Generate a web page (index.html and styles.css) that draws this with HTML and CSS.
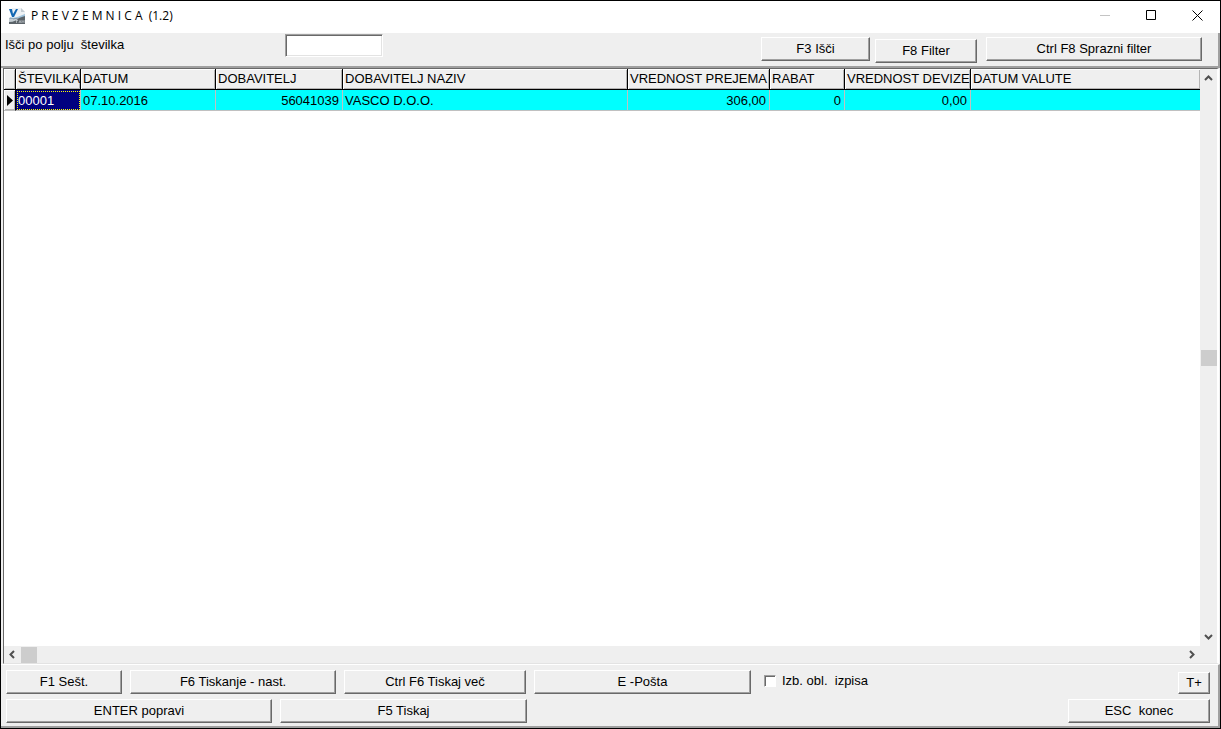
FILE: index.html
```html
<!DOCTYPE html>
<html lang="sl">

<head>
  <meta charset="utf-8">
  <title>PREVZEMNICA (1.2)</title>
  <meta name="viewport" content="width=device-width, initial-scale=1">
  <link rel="stylesheet" href="styles.css">
</head>

<body>
  <div class="window">
    <header class="titlebar">
      <svg class="logo" width="16" height="16" viewBox="0 0 16 16">
        <path d="M3 0h9l4 4v12H3z" fill="#eef2f5"/>
        <path d="M12 0v4h4z" fill="#c3ccd3"/>
        <path d="M1 9c5 2 9-1 15-3v5H0z" fill="#9fc3dc"/>
        <path d="M0 10c5 2 10 0 16-2v8H0z" fill="#5b6369"/>
        <path d="M0 10c4 2 7 1 10 0-2 2-5 4-10 4z" fill="#c5ced4"/>
        <path d="M7 12.500h2M7.500 12v3M10 15l1-2.500 1 2.500M13 15v-2.500l1 1 1-1V15" fill="none" stroke="#c9cfd3" stroke-width=".7"/>
        <path d="M0 1h3l1 5 3-5h2L5 9H3z" fill="#1268b3"/>
      </svg>
      <h1 class="title">P R E V Z E M N I C A&nbsp; (1.2)</h1>
      <button class="winbtn" aria-label="Minimize" disabled>
        <svg width="11" height="11" viewBox="0 0 11 11"><path d="M0 5.500h10" stroke="#c4c4c4"/></svg>
      </button>
      <button class="winbtn" aria-label="Maximize">
        <svg width="11" height="11" viewBox="0 0 11 11"><path d="M.5.5h9v9h-9z" fill="none" stroke="#000"/></svg>
      </button>
      <button class="winbtn" aria-label="Close">
        <svg width="11" height="11" viewBox="0 0 11 11"><path d="M.5.5l10 10M10.500.5l-10 10" stroke="#000"/></svg>
      </button>
    </header>

    <div class="toolbar">
      <label class="search-label" for="search">Išči po polju &nbsp;številka</label>
      <input class="search" id="search" type="text">
      <div class="toolbar-buttons">
        <button class="button find">F3 Išči</button>
        <button class="button filter">F8 Filter</button>
        <button class="button clear">Ctrl F8 Sprazni filter</button>
      </div>
    </div>

    <main class="grid">
      <div class="grid-view">
        <table class="table">
          <colgroup>
            <col class="col-mark">
            <col class="col-number">
            <col class="col-date">
            <col class="col-supplier">
            <col class="col-name">
            <col class="col-value">
            <col class="col-discount">
            <col class="col-currency">
            <col>
          </colgroup>
          <thead>
            <tr>
              <th></th>
              <th>ŠTEVILKA</th>
              <th>DATUM</th>
              <th>DOBAVITELJ</th>
              <th>DOBAVITELJ NAZIV</th>
              <th>VREDNOST PREJEMA</th>
              <th>RABAT</th>
              <th>VREDNOST DEVIZE</th>
              <th>DATUM VALUTE</th>
            </tr>
          </thead>
          <tbody>
            <tr>
              <td class="mark"><svg width="6" height="11" viewBox="0 0 6 11"><path d="M0 0l6 5.500-6 5.500z"/></svg></td>
              <td class="selected">00001</td>
              <td>07.10.2016</td>
              <td class="num">56041039</td>
              <td>VASCO D.O.O.</td>
              <td class="num">306,00</td>
              <td class="num">0</td>
              <td class="num">0,00</td>
              <td></td>
            </tr>
          </tbody>
        </table>
      </div>
      <div class="vscroll">
        <svg width="9" height="9" viewBox="0 0 9 9"><path d="M1 6l3.500-3.500L8 6"/></svg>
        <div class="thumb"></div>
        <svg width="9" height="9" viewBox="0 0 9 9"><path d="M1 3l3.500 3.500L8 3"/></svg>
      </div>
      <div class="hscroll">
        <svg width="9" height="9" viewBox="0 0 9 9"><path d="M6 1L2.500 4.500 6 8"/></svg>
        <div class="thumb"></div>
        <svg class="right" width="9" height="9" viewBox="0 0 9 9"><path d="M3 1l3.500 3.500L3 8"/></svg>
      </div>
    </main>

    <footer class="actions">
      <div class="row">
        <button class="button sum">F1 Sešt.</button>
        <button class="button print-setup">F6 Tiskanje - nast.</button>
        <button class="button print-more">Ctrl F6 Tiskaj več</button>
        <button class="button mail">E -Pošta</button>
        <label class="check"><input type="checkbox">Izb. obl. &nbsp;izpisa</label>
        <button class="button zoom">T+</button>
      </div>
      <div class="row">
        <button class="button edit">ENTER popravi</button>
        <button class="button print">F5 Tiskaj</button>
        <button class="button exit">ESC &nbsp;konec</button>
      </div>
    </footer>
  </div>
</body>

</html>
```

FILE: styles.css
```css
* {
  box-sizing: border-box;
}

body {
  margin: 0;
  font-family: "Liberation Sans", Arial, sans-serif;
  font-size: 13px;
  line-height: 16px;
  color: #000;
}

.window {
  display: flex;
  flex-direction: column;
  min-height: 100vh;
  border: 1px solid #000;
  background-color: #efefef;
}

/* title bar */
.titlebar {
  display: flex;
  align-items: center;
  height: 32px;
  padding-left: 8px;
  padding-bottom: 3px;
  background-color: #fff;
}

.title {
  flex: 1;
  margin: 0 0 0 6px;
  font-family: "Open Sans", "Noto Sans", sans-serif;
  font-size: 12px;
  font-weight: normal;
}

.winbtn {
  display: flex;
  align-items: center;
  justify-content: center;
  width: 46px;
  height: 28px;
  padding: 0;
  border: none;
  background: none;
}

/* search and filter */
.toolbar {
  display: flex;
  align-items: flex-start;
  height: 35px;
  padding: 1px 16px 0 4px;
  border-right: 2px solid #a0a0a0;
  border-bottom: 2px solid #a0a0a0;
}

.search-label {
  width: 280px;
  padding-top: 3px;
}

.search {
  width: 98px;
  height: 23px;
  padding: 1px 3px;
  border: 1px solid #a0a0a0;
  border-right-color: #fff;
  border-bottom-color: #fff;
  box-shadow: inset 1px 1px #696969, inset -1px -1px #e3e3e3;
  background-color: #fff;
  font: inherit;
}

.toolbar-buttons {
  display: flex;
  height: 26px;
  margin: 3px 0 0 auto;
}

.button {
  height: 24px;
  padding: 0;
  border: 1px solid #fff;
  border-right-color: #696969;
  border-bottom-color: #696969;
  border-radius: 0;
  box-shadow: inset -1px -1px #a0a0a0;
  background-color: #efefef;
  font: inherit;
  color: inherit;
}

.button:active {
  border-color: #696969 #fff #fff #696969;
}

.find {
  width: 109px;
}

.filter {
  align-self: flex-end;
  width: 102px;
  margin: 0 9px 0 5px;
}

.clear {
  width: 216px;
}

/* data grid */
.grid {
  flex: 1;
  display: grid;
  grid-template-columns: 1fr 17px;
  grid-template-rows: 1fr 17px;
  margin: 0 1px 0 2px;
  border-top: 1px solid #696969;
  border-left: 1px solid #696969;
  border-right: 2px solid #fff;
  border-bottom: 1px solid #e3e3e3;
}

.grid-view {
  overflow: hidden;
  background-color: #fff;
}

.table {
  width: 100%;
  table-layout: fixed;
  border-collapse: separate;
  border-spacing: 0;
}

.col-mark {
  width: 12px;
}

.col-number {
  width: 65px;
}

.col-date {
  width: 135px;
}

.col-supplier {
  width: 127px;
}

.col-name {
  width: 285px;
}

.col-value {
  width: 142px;
}

.col-discount {
  width: 75px;
}

.col-currency {
  width: 126px;
}

th,
td {
  height: 21px;
  padding: 0 2px;
  overflow: hidden;
  text-align: left;
  font-weight: normal;
  white-space: nowrap;
}

th {
  padding: 0 0 0 2px;
  border-right: 1px solid #000;
  border-bottom: 1px solid #000;
  background-color: #efefef;
  box-shadow: inset 1px 1px #fff, inset -1px -1px #b4b4b4;
}

td {
  padding: 2px 3px 0 2px;
  border-right: 1px solid #c0c0c0;
  border-bottom: 1px solid #c0c0c0;
  background-color: #0ff;
}

th:last-child,
td:last-child {
  border-right: none;
}

.num {
  text-align: right;
}

.mark {
  padding: 0 0 0 3px;
  border-right-color: #000;
  background-color: #efefef;
  box-shadow: inset 1px 1px #fff, inset -1px -1px #b4b4b4;
}

.mark svg {
  display: block;
}

.selected {
  background-color: #000080;
  color: #fff;
  outline: 1px dotted #ff0;
  outline-offset: -2px;
}

/* scroll bars */
.vscroll,
.hscroll {
  display: flex;
  align-items: center;
  justify-content: space-between;
}

.vscroll {
  flex-direction: column;
  padding: 5px 0;
}

.hscroll {
  padding: 0 4px;
}

.vscroll path,
.hscroll path {
  fill: none;
  stroke: #505050;
  stroke-width: 2;
}

.thumb {
  width: 16px;
  height: 16px;
  background-color: #cdcdcd;
}

.hscroll .thumb {
  margin-left: 4px;
}

.right {
  margin-left: auto;
}

/* bottom buttons */
.actions {
  display: flex;
  flex-direction: column;
  gap: 5px;
  padding: 5px 8px 3px 5px;
  border-top: 1px solid #fff;
  border-right: 2px solid #a0a0a0;
  border-bottom: 2px solid #a0a0a0;
}

.row {
  display: flex;
  gap: 8px;
}

.sum {
  width: 116px;
}

.print-setup {
  width: 206px;
}

.print-more {
  width: 182px;
}

.mail {
  width: 217px;
}

.check {
  display: flex;
  align-items: center;
  gap: 6px;
  height: 22px;
  margin-left: 5px;
}

.check input {
  appearance: none;
  width: 12px;
  height: 12px;
  margin: 0;
  border: 1px solid #a0a0a0;
  border-right-color: #fff;
  border-bottom-color: #fff;
  box-shadow: inset 1px 1px #696969;
  background-color: #fff;
}

.check input:checked {
  background-color: #000080;
}

.zoom {
  align-self: flex-end;
  width: 32px;
  height: 22px;
  margin-left: auto;
}

.edit {
  width: 266px;
}

.print {
  width: 247px;
}

.exit {
  width: 142px;
  margin-left: auto;
}
```
